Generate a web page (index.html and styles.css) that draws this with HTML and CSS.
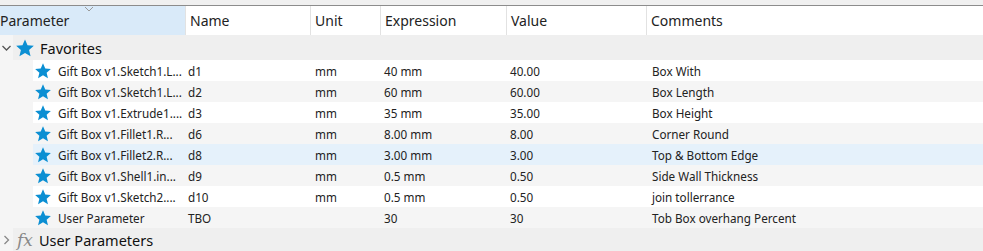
FILE: index.html
```html
<!DOCTYPE html>
<html>
<head>
<meta charset="utf-8">
<link rel="stylesheet" href="styles.css">
</head>
<body>
<div class="table">
  <div class="topband"></div>
  <div class="header">
    <div class="hcell first">Parameter<svg class="sort" width="10" height="6" viewBox="0 0 10 6"><polyline points="1,1 5,5 9,1" fill="none" stroke="#9a9a9a" stroke-width="1"/></svg></div>
    <div class="hcell">Name</div>
    <div class="hcell">Unit</div>
    <div class="hcell">Expression</div>
    <div class="hcell">Value</div>
    <div class="hcell last">Comments</div>
  </div>
  <div class="group">
    <svg class="chev" width="10" height="8" viewBox="0 0 10 8"><polyline points="1,2 5,6 9,2" fill="none" stroke="#555" stroke-width="1.3"/></svg>
    <div class="groupbody">
      <svg class="gstar" width="18" height="18" viewBox="1 1 22 22"><path d="M12 1.5l3.1 7.1 7.7.7-5.8 5.1 1.8 7.6L12 18l-6.8 4 1.8-7.6-5.8-5.1 7.7-.7z" fill="#0b8fd3"/></svg>
      <span>Favorites</span>
    </div>
  </div>
  <div class="rows">
    <div class="row"><div class="c1"><svg class="star" width="16" height="16" viewBox="1 1 22 22"><path d="M12 1.5l3.1 7.1 7.7.7-5.8 5.1 1.8 7.6L12 18l-6.8 4 1.8-7.6-5.8-5.1 7.7-.7z" fill="#0b8fd3"/></svg><span>Gift Box v1.Sketch1.L...</span></div><div class="c2">d1</div><div class="c3">mm</div><div class="c4">40 mm</div><div class="c5">40.00</div><div class="c6">Box With</div></div>
    <div class="row alt"><div class="c1"><svg class="star" width="16" height="16" viewBox="1 1 22 22"><path d="M12 1.5l3.1 7.1 7.7.7-5.8 5.1 1.8 7.6L12 18l-6.8 4 1.8-7.6-5.8-5.1 7.7-.7z" fill="#0b8fd3"/></svg><span>Gift Box v1.Sketch1.L...</span></div><div class="c2">d2</div><div class="c3">mm</div><div class="c4">60 mm</div><div class="c5">60.00</div><div class="c6">Box Length</div></div>
    <div class="row"><div class="c1"><svg class="star" width="16" height="16" viewBox="1 1 22 22"><path d="M12 1.5l3.1 7.1 7.7.7-5.8 5.1 1.8 7.6L12 18l-6.8 4 1.8-7.6-5.8-5.1 7.7-.7z" fill="#0b8fd3"/></svg><span>Gift Box v1.Extrude1....</span></div><div class="c2">d3</div><div class="c3">mm</div><div class="c4">35 mm</div><div class="c5">35.00</div><div class="c6">Box Height</div></div>
    <div class="row alt"><div class="c1"><svg class="star" width="16" height="16" viewBox="1 1 22 22"><path d="M12 1.5l3.1 7.1 7.7.7-5.8 5.1 1.8 7.6L12 18l-6.8 4 1.8-7.6-5.8-5.1 7.7-.7z" fill="#0b8fd3"/></svg><span>Gift Box v1.Fillet1.R...</span></div><div class="c2">d6</div><div class="c3">mm</div><div class="c4">8.00 mm</div><div class="c5">8.00</div><div class="c6">Corner Round</div></div>
    <div class="row sel"><div class="c1"><svg class="star" width="16" height="16" viewBox="1 1 22 22"><path d="M12 1.5l3.1 7.1 7.7.7-5.8 5.1 1.8 7.6L12 18l-6.8 4 1.8-7.6-5.8-5.1 7.7-.7z" fill="#0b8fd3"/></svg><span>Gift Box v1.Fillet2.R...</span></div><div class="c2">d8</div><div class="c3">mm</div><div class="c4">3.00 mm</div><div class="c5">3.00</div><div class="c6">Top &amp; Bottom Edge</div></div>
    <div class="row alt"><div class="c1"><svg class="star" width="16" height="16" viewBox="1 1 22 22"><path d="M12 1.5l3.1 7.1 7.7.7-5.8 5.1 1.8 7.6L12 18l-6.8 4 1.8-7.6-5.8-5.1 7.7-.7z" fill="#0b8fd3"/></svg><span>Gift Box v1.Shell1.in...</span></div><div class="c2">d9</div><div class="c3">mm</div><div class="c4">0.5 mm</div><div class="c5">0.50</div><div class="c6">Side Wall Thickness</div></div>
    <div class="row"><div class="c1"><svg class="star" width="16" height="16" viewBox="1 1 22 22"><path d="M12 1.5l3.1 7.1 7.7.7-5.8 5.1 1.8 7.6L12 18l-6.8 4 1.8-7.6-5.8-5.1 7.7-.7z" fill="#0b8fd3"/></svg><span>Gift Box v1.Sketch2....</span></div><div class="c2">d10</div><div class="c3">mm</div><div class="c4">0.5 mm</div><div class="c5">0.50</div><div class="c6">join tollerrance</div></div>
    <div class="row alt"><div class="c1"><svg class="star" width="16" height="16" viewBox="1 1 22 22"><path d="M12 1.5l3.1 7.1 7.7.7-5.8 5.1 1.8 7.6L12 18l-6.8 4 1.8-7.6-5.8-5.1 7.7-.7z" fill="#0b8fd3"/></svg><span>User Parameter</span></div><div class="c2">TBO</div><div class="c3"></div><div class="c4">30</div><div class="c5">30</div><div class="c6">Tob Box overhang Percent</div></div>
  </div>
  <div class="group">
    <svg class="chev" width="10" height="10" viewBox="0 0 10 10"><polyline points="3,1 7,5 3,9" fill="none" stroke="#888" stroke-width="1.3"/></svg>
    <div class="groupbody">
      <span class="fx">fx</span>
      <span>User Parameters</span>
    </div>
  </div>
</div>
</body>
</html>
```

FILE: styles.css
```css
html, body {
  margin: 0;
  padding: 0;
  background: #f5f5f5;
}
body {
  font-family: "Noto Sans", "Open Sans", sans-serif;
  color: #1f1f1f;
  width: 983px;
  height: 251px;
  overflow: hidden;
}
.topband {
  height: 5px;
  background: #f0f0f0;
  border-bottom: 1px solid #8c8c8c;
}
.header {
  display: grid;
  grid-template-columns: 185px 125px 70px 126px 140px 1fr;
  height: 29px;
  background: #ffffff;
  font-size: 14px;
}
.hcell {
  display: flex;
  align-items: center;
  padding-left: 4px;
  border-left: 1px solid #e2e2e2;
  color: #222;
}
.hcell.first {
  position: relative;
  background: #d9eaf9;
  padding-left: 0;
  border-left: none;
}
.sort {
  position: absolute;
  left: 84px;
  top: 0;
}
.group {
  display: flex;
  align-items: stretch;
  height: 25px;
}
.chev {
  width: 13px;
  flex: 0 0 13px;
  align-self: center;
  margin-left: 0;
}
.groupbody {
  flex: 1;
  display: flex;
  align-items: center;
  background: #efefef;
  font-size: 14.5px;
  color: #111;
}
.gstar {
  margin-left: 3px;
  margin-right: 6px;
}
.group:last-child {
  height: 23px;
}
.fx {
  font-family: "DejaVu Serif", "Liberation Serif", serif;
  font-style: italic;
  font-size: 17px;
  color: #888;
  margin-left: 4px;
  margin-right: 6px;
}
.rows {
  padding-left: 33px;
}
.row {
  display: grid;
  grid-template-columns: 152px 127px 69px 126px 142px 1fr;
  height: 21px;
  background: #ffffff;
  font-size: 11.7px;
  color: #222;
  align-items: center;
}
.row.alt {
  background: #f5f5f5;
}
.row.sel {
  background: #e5f1fb;
}
.row > div {
  white-space: nowrap;
  overflow: hidden;
  padding-left: 3px;
}
.row > .c1 {
  display: flex;
  align-items: center;
  padding-left: 0;
}
.star {
  margin-left: 2px;
  margin-right: 7px;
  flex: 0 0 auto;
}
```
